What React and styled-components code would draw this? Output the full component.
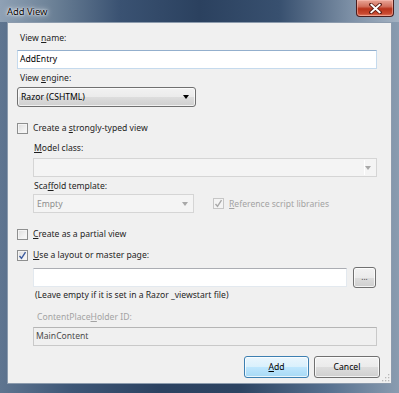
import React from "react";
import styled, { createGlobalStyle } from "styled-components";

const FS = 8.6;

const Global = createGlobalStyle`
  html, body { margin: 0; padding: 0; background: #2d4462; }
  body { font-family: "Noto Sans", "Open Sans", sans-serif; font-size: ${FS}px; }
  * { box-sizing: border-box; }
`;

const Window = styled.div`
  width: 399px;
  height: 393px;
  display: flex;
  flex-direction: column;
  background: linear-gradient(90deg, #5f7590 0%, #3d5676 18%, #2c4261 40%, #2d4462 60%, #56708f 82%, #8a9cb0 100%);
  overflow: hidden;
`;

const TitleBar = styled.div`
  height: 22px;
  display: flex;
  align-items: flex-start;
  justify-content: space-between;
  background: linear-gradient(90deg, #8fa1b5 0%, #6f8499 12%, #3a5272 30%, #2b415f 50%, #38506f 70%, #7d90a6 88%, #a4b2c2 100%);
`;

const Title = styled.div`
  margin: 5px 0 0 7px;
  font-size: 9.4px;
  line-height: 14px;
  color: #000;
  text-shadow: 0 0 6px #fff, 0 0 3px #fff, 0 0 1px #fff;
`;

const CloseButton = styled.div`
  width: 38px;
  height: 17px;
  margin-right: 5px;
  border: 1px solid #4a1d1d;
  border-top: none;
  border-radius: 0 0 4px 4px;
  background: linear-gradient(180deg, #e9a597 0%, #d2705d 40%, #b8331b 55%, #c94a31 85%, #e27f66 100%);
  display: flex;
  align-items: center;
  justify-content: center;
  box-shadow: inset 0 0 0 1px rgba(255, 200, 190, 0.5);
`;

const Client = styled.div`
  flex: 1;
  margin: 0 7px 9px 7px;
  background: #f0f0f0;
  border: 1px solid #8c9bad;
  display: flex;
  flex-direction: column;
  padding: 0 14px 0 9px;
  color: #000;
  position: relative;
`;

const Label = styled.div`
  height: 14px;
  line-height: 14px;
  font-size: ${FS}px;
  margin-top: ${(p) => p.$mt || 0}px;
  margin-left: ${(p) => p.$ml || 3}px;
  color: ${(p) => (p.$disabled ? "#a3a3a3" : "#1e1e1e")};
  white-space: nowrap;
`;

const U = styled.span`
  text-decoration: underline;
`;

const TextBox = styled.div`
  height: ${(p) => p.$h || 19}px;
  margin-top: ${(p) => p.$mt || 0}px;
  margin-left: ${(p) => p.$ml || 0}px;
  width: ${(p) => (p.$w ? p.$w + "px" : "auto")};
  background: ${(p) => (p.$disabled ? "#f0f0f0" : "#fff")};
  border: 1px solid ${(p) => (p.$focus ? "#c5daed" : p.$disabled ? "#c9c9c9" : "#e3e9ef")};
  border-top-color: ${(p) => (p.$focus ? "#93afcd" : p.$disabled ? "#b5b5b5" : "#abadb3")};
  font-size: ${FS}px;
  line-height: 17px;
  padding-left: 2px;
  color: ${(p) => (p.$disabled ? "#4c4c4c" : "#000")};
`;

const Select = styled.div`
  width: 179px;
  height: 20px;
  margin-top: ${(p) => p.$mt || 0}px;
  border: 1px solid #707070;
  border-radius: 3px;
  background: linear-gradient(180deg, #f2f2f2 0%, #ebebeb 50%, #dddddd 51%, #cfcfcf 100%);
  box-shadow: inset 0 0 0 1px rgba(255, 255, 255, 0.7);
  display: flex;
  align-items: center;
  justify-content: space-between;
  padding: 0 6px 0 3px;
  font-size: ${FS}px;
`;

const Arrow = styled.span`
  width: 0;
  height: 0;
  border-left: 3.5px solid transparent;
  border-right: 3.5px solid transparent;
  border-top: 4px solid ${(p) => p.$color || "#000"};
`;

const DisabledCombo = styled.div`
  width: ${(p) => (p.$w ? p.$w + "px" : "auto")};
  height: 19px;
  margin-top: ${(p) => p.$mt || 0}px;
  margin-left: ${(p) => p.$ml || 0}px;
  border: 1px solid #d5d5d5;
  background: #f4f4f4;
  display: flex;
  align-items: center;
  justify-content: space-between;
  padding: 0 5px 0 3px;
  font-size: ${FS}px;
  color: #8d8d8d;
`;

const ComboBody = styled.div`
  flex: 1;
  align-self: stretch;
  margin: 1px 0 1px -2px;
  background: #f4f4f4;
  border-right: 1px solid #fff;
`;

const CheckRow = styled.div`
  display: flex;
  align-items: center;
  height: 14px;
  margin-top: ${(p) => p.$mt || 0}px;
  margin-left: ${(p) => p.$ml || 0}px;
  gap: 5px;
  font-size: ${FS}px;
  color: ${(p) => (p.$disabled ? "#a3a3a3" : "#1e1e1e")};
  white-space: nowrap;
`;

const Box = styled.span`
  width: 11px;
  height: 11px;
  border: 1px solid ${(p) => (p.$disabled ? "#c6c6c6" : "#8e8f8f")};
  background: ${(p) =>
    p.$disabled
      ? "#f4f4f4"
      : "linear-gradient(135deg, #dcdcdc 0%, #f0f0f0 60%, #fafafa 100%)"};
  box-shadow: inset 0 0 0 1px #f4f4f4;
  display: flex;
  align-items: center;
  justify-content: center;
  flex: none;
`;

const Row = styled.div`
  display: flex;
  align-items: center;
  margin-top: ${(p) => p.$mt || 0}px;
  margin-left: ${(p) => p.$ml || 0}px;
  gap: ${(p) => p.$gap || 0}px;
`;

const PushButton = styled.div`
  width: ${(p) => p.$w}px;
  height: ${(p) => p.$h || 22}px;
  border: 1px solid ${(p) => (p.$default ? "#3c7fb1" : "#707070")};
  border-radius: 3px;
  background: ${(p) =>
    p.$default
      ? "linear-gradient(180deg, #eaf6fd 0%, #d9f0fc 50%, #bee6fd 51%, #a7d9f5 100%)"
      : "linear-gradient(180deg, #f2f2f2 0%, #ebebeb 50%, #dddddd 51%, #cfcfcf 100%)"};
  box-shadow: inset 0 0 0 1px rgba(255, 255, 255, 0.75);
  display: flex;
  align-items: center;
  justify-content: center;
  font-size: ${FS}px;
  color: #000;
`;

const Ellipsis = styled.span`
  font-size: 8px;
  color: #444;
  margin-top: -2px;
`;

const ButtonBar = styled.div`
  display: flex;
  justify-content: flex-end;
  gap: 5px;
  margin-top: 10px;
  margin-right: -3px;
`;

const Grip = styled.svg`
  position: absolute;
  right: 1px;
  bottom: 1px;
`;

const Check = ({ color }) => (
  <svg width="9" height="9" viewBox="0 0 9 9">
    <path d="M1.5 5 L3.5 7.3 L7.5 1.2" fill="none" stroke={color} strokeWidth="1.4" />
  </svg>
);

export default function App() {
  return (
    <>
      <Global />
      <Window>
        <TitleBar>
          <Title>Add View</Title>
          <CloseButton>
            <svg width="13" height="11" viewBox="0 0 13 11">
              <path d="M2 1.5 L11 9.5 M11 1.5 L2 9.5" stroke="#5a1c14" strokeWidth="3.6" strokeLinecap="square" />
              <path d="M2.4 1.8 L10.6 9.2 M10.6 1.8 L2.4 9.2" stroke="#fff" strokeWidth="2" strokeLinecap="square" />
            </svg>
          </CloseButton>
        </TitleBar>
        <Client>
          <Label $mt={8}>
            View <U>n</U>ame:
          </Label>
          <TextBox $mt={5} $h={19} $focus>
            AddEntry
          </TextBox>
          <Label $mt={2}>
            View <U>e</U>ngine:
          </Label>
          <Select $mt={2}>
            <span>Razor (CSHTML)</span>
            <Arrow />
          </Select>
          <CheckRow $mt={14}>
            <Box />
            <span>
              Create a <U>s</U>trongly-typed view
            </span>
          </CheckRow>
          <Label $mt={6} $ml={17}>
            <U>M</U>odel class:
          </Label>
          <DisabledCombo $mt={3} $ml={16}>
            <ComboBody />
            <Arrow $color="#a8a8a8" />
          </DisabledCombo>
          <Label $mt={2} $ml={17}>
            Sca<U>f</U>fold template:
          </Label>
          <Row $mt={1} $ml={16} $gap={19}>
            <DisabledCombo $w={161}>
              <span>Empty</span>
              <Arrow $color="#a8a8a8" />
            </DisabledCombo>
            <CheckRow $disabled>
              <Box $disabled>
                <Check color="#a9a9a9" />
              </Box>
              <span>
                <U>R</U>eference script libraries
              </span>
            </CheckRow>
          </Row>
          <CheckRow $mt={14}>
            <Box />
            <span>
              <U>C</U>reate as a partial view
            </span>
          </CheckRow>
          <CheckRow $mt={7}>
            <Box>
              <Check color="#3e5da0" />
            </Box>
            <span>
              <U>U</U>se a layout or master page:
            </span>
          </CheckRow>
          <Row $mt={5} $ml={16} $gap={6}>
            <TextBox $w={314} $h={19} />
            <PushButton $w={23} $h={21}>
              <Ellipsis>...</Ellipsis>
            </PushButton>
          </Row>
          <Label $ml={18}>(Leave empty if it is set in a Razor _viewstart file)</Label>
          <Label $mt={8} $ml={20} $disabled>
            ContentPlace<U>H</U>older ID:
          </Label>
          <TextBox $mt={3} $ml={16} $h={19} $disabled>
            MainContent
          </TextBox>
          <ButtonBar>
            <PushButton $w={65} $default>
              <span>
                <U>A</U>dd
              </span>
            </PushButton>
            <PushButton $w={66}>Cancel</PushButton>
          </ButtonBar>
          <Grip width="8" height="8" viewBox="0 0 8 8">
            <g fill="#b8b8b8">
              <rect x="6" y="0" width="1.3" height="1.3" />
              <rect x="3" y="3" width="1.3" height="1.3" />
              <rect x="6" y="3" width="1.3" height="1.3" />
              <rect x="0" y="6" width="1.3" height="1.3" />
              <rect x="3" y="6" width="1.3" height="1.3" />
              <rect x="6" y="6" width="1.3" height="1.3" />
            </g>
          </Grip>
        </Client>
      </Window>
    </>
  );
}
